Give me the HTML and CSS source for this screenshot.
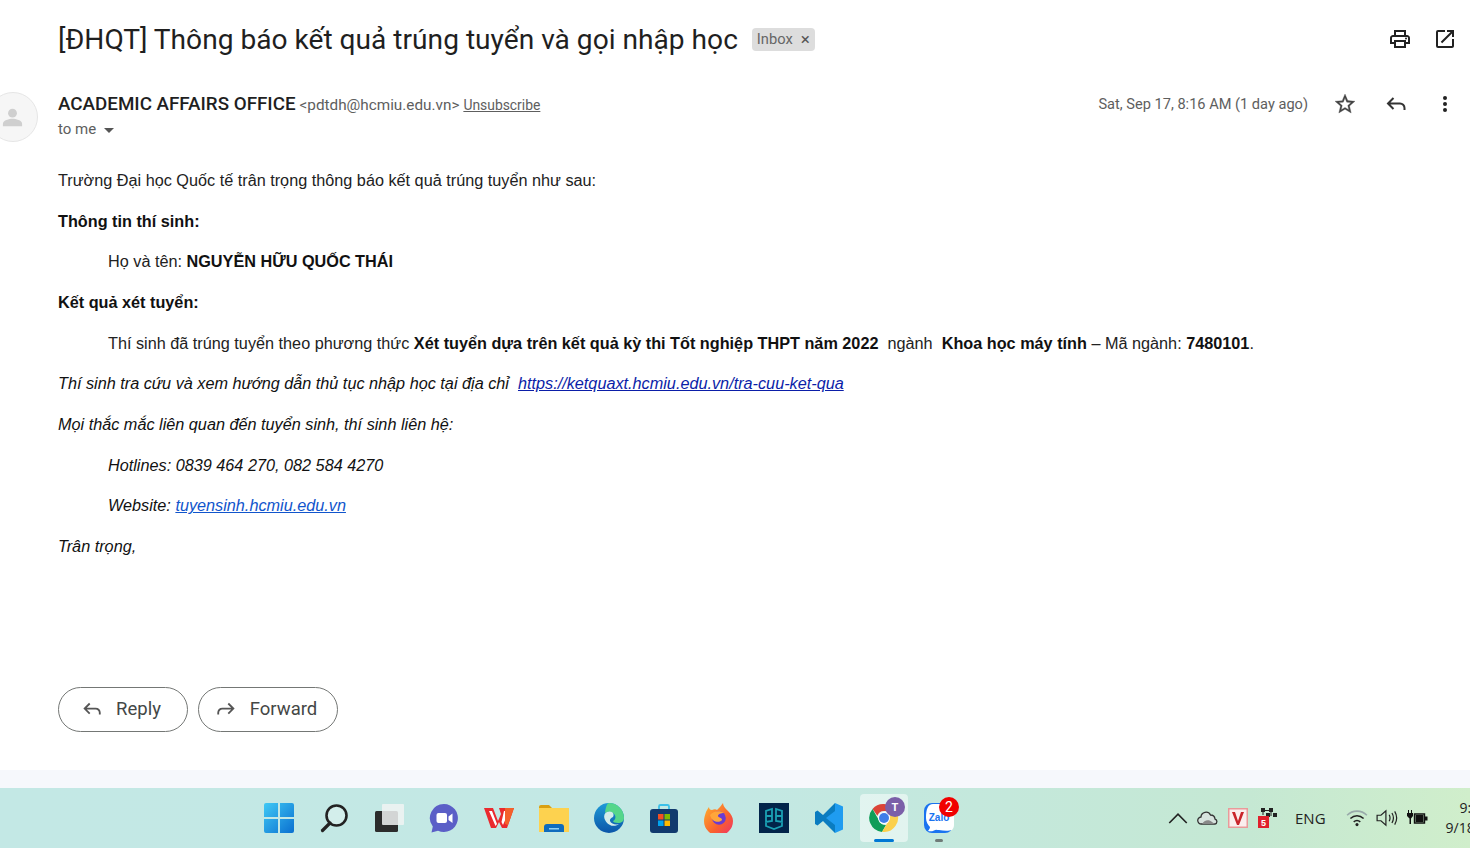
FILE: index.html
```html
<!DOCTYPE html>
<html lang="vi">
<head>
<meta charset="utf-8">
<title>Thông báo kết quả trúng tuyển</title>
<link rel="stylesheet" href="styles.css">
</head>
<body>
<div class="page">
<main class="mail">
  <header class="subject-row">
    <h1 class="subject">[ĐHQT] Thông báo kết quả trúng tuyển và gọi nhập học</h1>
    <span class="label">Inbox<span class="label-x">×</span></span>
    <div class="subject-actions">
      <svg class="icon" viewBox="0 0 24 24"><path d="M19 8h-1V3H6v5H5c-1.66 0-3 1.34-3 3v6h4v4h12v-4h4v-6c0-1.66-1.34-3-3-3zM8 5h8v3H8V5zm8 12v2H8v-4h8v2zm2-2v-2H6v2H4v-4c0-.55.45-1 1-1h14c.55 0 1 .45 1 1v4h-2z"/><circle cx="18" cy="11.5" r="1"/></svg>
      <svg class="icon" viewBox="0 0 24 24"><path d="M19 19H5V5h7V3H5a2 2 0 0 0-2 2v14a2 2 0 0 0 2 2h14c1.1 0 2-.9 2-2v-7h-2v7zM14 3v2h3.59l-9.83 9.83 1.41 1.41L19 6.41V10h2V3h-7z"/></svg>
    </div>
  </header>

  <section class="sender-row">
    <div class="avatar">
      <svg viewBox="0 0 24 24" class="avatar-glyph"><circle cx="12" cy="7.5" r="4.6"/><path d="M2 21v-2.6c0-3.4 6.6-5 10-5s10 1.6 10 5V21z"/></svg>
    </div>
    <div class="sender-meta">
      <div class="sender-line"><span class="sender-name">ACADEMIC AFFAIRS OFFICE</span> <span class="sender-mail">&lt;pdtdh@hcmiu.edu.vn&gt;</span> <a class="unsub">Unsubscribe</a></div>
      <div class="to-line">to me<span class="caret"></span></div>
    </div>
    <div class="sender-actions">
      <span class="date">Sat, Sep 17, 8:16 AM (1 day ago)</span>
      <svg class="icon star" viewBox="0 0 24 24"><path d="M22 9.24l-7.19-.62L12 2 9.19 8.63 2 9.24l5.46 4.73L5.82 21 12 17.27 18.18 21l-1.63-7.03L22 9.24zM12 15.4l-3.76 2.27 1-4.28-3.32-2.88 4.38-.38L12 6.1l1.71 4.04 4.38.38-3.32 2.88 1 4.28L12 15.4z"/></svg>
      <svg class="icon line-icon" viewBox="0 0 24 24"><path d="M9.5 6 4 11.5 9.500 17M4.500 11.500H16a4.500 4.500 0 0 1 4.500 4.500v2"/></svg>
      <svg class="icon" viewBox="0 0 24 24"><circle cx="12" cy="6" r="2"/><circle cx="12" cy="12" r="2"/><circle cx="12" cy="18" r="2"/></svg>
    </div>
  </section>

  <article class="message">
    <p>Trường Đại học Quốc tế trân trọng thông báo kết quả trúng tuyển như sau:</p>
    <p><b>Thông tin thí sinh:</b></p>
    <p class="indent">Họ và tên: <b>NGUYỄN HỮU QUỐC THÁI</b></p>
    <p><b>Kết quả xét tuyển:</b></p>
    <p class="indent">Thí sinh đã trúng tuyển theo phương thức <b>Xét tuyển dựa trên kết quả kỳ thi Tốt nghiệp THPT năm 2022</b>&nbsp; ngành&nbsp; <b>Khoa học máy tính</b> – Mã ngành: <b>7480101</b>.</p>
    <p><i>Thí sinh tra cứu và xem hướng dẫn thủ tục nhập học tại địa chỉ&nbsp; <a class="link-dark">https://ketquaxt.hcmiu.edu.vn/tra-cuu-ket-qua</a></i></p>
    <p><i>Mọi thắc mắc liên quan đến tuyển sinh, thí sinh liên hệ:</i></p>
    <p class="indent"><i>Hotlines: 0839 464 270, 082 584 4270</i></p>
    <p class="indent"><i>Website: <a class="link-blue">tuyensinh.hcmiu.edu.vn</a></i></p>
    <p><i>Trân trọng,</i></p>
  </article>

  <div class="reply-actions">
    <button class="pill pill-reply">
      <svg class="pill-icon" viewBox="0 0 24 24"><path d="M9.500 6 4 11.500 9.500 17M4.500 11.500H16a4.500 4.500 0 0 1 4.500 4.500v2"/></svg>
      Reply
    </button>
    <button class="pill pill-forward">
      <svg class="pill-icon" viewBox="0 0 24 24"><path d="M14.500 6 20 11.500 14.500 17M19.500 11.500H8A4.500 4.500 0 0 0 3.500 16v2"/></svg>
      Forward
    </button>
  </div>
</main>
<div class="strip"></div>

<footer class="taskbar">
  <div class="apps">
    <div class="app"><svg width="30" height="30" viewBox="0 0 30 30"><defs><linearGradient id="w" x1="0" y1="0" x2="1" y2="1"><stop offset="0" stop-color="#3fc9f5"/><stop offset="1" stop-color="#0a6fd0"/></linearGradient></defs><path fill="url(#w)" d="M2 0h12v14H0V2a2 2 0 0 1 2-2zM16 0h12a2 2 0 0 1 2 2v12H16zM0 16h14v14H2a2 2 0 0 1-2-2zM16 16h14v12a2 2 0 0 1-2 2H16z"/></svg></div>
    <div class="app"><svg width="30" height="30" viewBox="0 0 30 30"><circle cx="17.500" cy="12.500" r="10" fill="#d3eeeb" stroke="#222" stroke-width="2.600"/><path d="M11 20 3.500 27.500" stroke="#222" stroke-width="3.200" stroke-linecap="round"/></svg></div>
    <div class="app"><svg width="30" height="30" viewBox="0 0 30 30"><rect x="1" y="8" width="23" height="21" rx="1.500" fill="#2c2c2c"/><rect x="8" y="1" width="22" height="21" rx="1" fill="#f1f3f3" fill-opacity=".85"/></svg></div>
    <div class="app"><svg width="30" height="30" viewBox="0 0 30 30"><path fill="#5b5fc7" d="M15 1a14 14 0 1 1-6 26.700L2.500 29.500l1.300-6A14 14 0 0 1 15 1z"/><rect x="7.500" y="10" width="10.500" height="10" rx="2" fill="#fff"/><path fill="#fff" d="m19.500 13.500 4-3v9.500l-4-3z"/></svg></div>
    <div class="app"><svg width="30" height="30" viewBox="0 0 30 30"><path fill="#ea2a2f" d="M0 5h9l5 13 3-7-2-6h15l-7 20h-5l-3-6-3 6H7z"/><path fill="#fff" d="M5 8h3l5 13-1.500 2zM20 8h5l-6 14-1.500-3z"/><path fill="#f4602a" d="M21 5h9l-6 17-3-1z"/></svg></div>
    <div class="app"><svg width="30" height="30" viewBox="0 0 30 30"><path fill="#d9a013" d="M0 4a2 2 0 0 1 2-2h8l3 3H0z"/><rect y="5" width="30" height="24" fill="#fdd24f"/><path fill="#0f6cbd" d="M5 29v-5a3 3 0 0 1 3-3h14a3 3 0 0 1 3 3v5z"/><rect x="10" y="25" width="10" height="1.500" fill="#8fd0f5"/></svg></div>
    <div class="app"><svg width="30" height="30" viewBox="0 0 30 30"><defs><linearGradient id="e" x1="0" y1="0" x2="0" y2="1"><stop offset="0" stop-color="#1e9bd8"/><stop offset="1" stop-color="#0b55a8"/></linearGradient></defs><circle cx="15" cy="15" r="15" fill="url(#e)"/><path fill="#55d68a" d="M15 0a15 15 0 0 1 15 15c0 3-2.500 5-6 5-3 0-5-1-5-2 3-1 3.500-6 0-8-3-2-6-1-8 0 0 0 1-10 4-10z"/><path fill="#d3ecea" d="M13 9c5-2 8 2 6 5-2 1-3.500 2-3 4 1 3 6 4 9 3-1 1-6 3-9 1-6-3-8-11-3-13z"/></svg></div>
    <div class="app"><svg width="30" height="30" viewBox="0 0 30 30"><path d="M10 7V3.500A1.500 1.500 0 0 1 11.500 2h7A1.500 1.500 0 0 1 20 3.500V7" fill="none" stroke="#3cc0e8" stroke-width="1.800"/><rect x="1" y="6" width="28" height="24" rx="3" fill="#113a6e"/><rect x="9" y="11" width="5.500" height="5.500" fill="#f25022"/><rect x="15.500" y="11" width="5.500" height="5.500" fill="#7fba00"/><rect x="9" y="17.500" width="5.500" height="5.500" fill="#00a4ef"/><rect x="15.500" y="17.500" width="5.500" height="5.500" fill="#ffb900"/></svg></div>
    <div class="app"><svg width="30" height="30" viewBox="0 0 30 30"><defs><linearGradient id="f" x1="0" y1="0" x2="1" y2="1"><stop offset="0" stop-color="#ffb52e"/><stop offset=".6" stop-color="#f9602e"/><stop offset="1" stop-color="#ee2f70"/></linearGradient></defs><path fill="url(#f)" d="M2 9c1-2 2-4 3-5 0 2 1 3 3 3 2-1 4-1 5 0 2-2 4-4 6-7 0 3 2 5 5 8 3 3 5 6 5 10a14.500 14.500 0 0 1-29 0c0-3 1-6 2-9z"/><circle cx="15" cy="15" r="6.800" fill="#6a3bd1"/><path fill="#ffa63a" d="M6 12c3-4 10-5 14-2-3 0-6 1-6 3 0 2 4 1 4 4-2 3-10 3-12-5z"/></svg></div>
    <div class="app"><svg width="30" height="30" viewBox="0 0 30 30"><rect width="30" height="30" fill="#02244a"/><path fill="none" stroke="#1aa0b4" stroke-width="1.800" d="M7 19V8l6-2v12l-6 1zm16 0V8l-6-2v12l6 1zM7 19v4l8 3 8-3v-4M13 13H7m10 0h6"/></svg></div>
    <div class="app"><svg width="30" height="30" viewBox="0 0 30 30"><path fill="#0a7cc0" d="M21 0 9 12 3.500 7.500 1 9v12l2.500 1.500L9 18l12 12z"/><path fill="#1f9cf0" d="M21 0l8 3.500v23L21 30zM21 8l-9 7 9 7z"/><path fill="#0a7cc0" d="M3.500 10.500 7 15l-3.500 4.500z"/></svg></div>
    <div class="app app-active">
      <svg class="chrome" width="30" height="30" viewBox="0 0 30 30"><path fill="#db4437" d="M15 1a14 14 0 0 1 12.100 7H15a7 7 0 0 0-6.600 4.700L3.500 6A14 14 0 0 1 15 1z"/><path fill="#0f9d58" d="M3.500 6l6 10.500A7 7 0 0 0 17 22l-4 6.900A14 14 0 0 1 3.500 6z"/><path fill="#fbd04c" d="M27.100 8a14 14 0 0 1-14.100 20.900L19.500 18a7 7 0 0 0-1-9.900z"/><circle cx="15" cy="15" r="6" fill="#fff"/><circle cx="15" cy="15" r="5" fill="#3f7ee8"/></svg>
      <span class="badge badge-teams">T</span>
      <span class="run run-active"></span>
    </div>
    <div class="app">
      <svg width="30" height="30" viewBox="0 0 30 30"><path fill="#1a73f0" d="M8 0h14c4 0 6 2 7 5v17a8 8 0 0 1-8 8H8a8 8 0 0 1-8-8V8a8 8 0 0 1 8-8z"/><path fill="#fff" d="M9 1h13c4 0 8 3 8 8v13c0 2-1 4-2 5-3 1-8 1-13 0-2 0-3-1-5 .500-2 1-4 1-6 .500 1-1 2-3 2-4-2-2-4-5-4-9C2 6 4 1 9 1z"/><text class="zalo-text" x="15" y="18" text-anchor="middle">Zalo</text></svg>
      <span class="badge badge-red">2</span>
      <span class="run run-idle"></span>
    </div>
  </div>
  <div class="tray">
    <svg class="tray-icon tray-chevron" viewBox="0 0 16 16"><path d="M1 12 8 5l7 7"/></svg>
    <svg class="tray-icon" viewBox="0 0 22 16"><path fill="#d7e3de" stroke="#333" stroke-width="1.300" d="M4.500 14a3.500 3.500 0 0 1-.5-7A5 5 0 0 1 13.500 5 4.500 4.500 0 0 1 18 9a2.600 2.600 0 0 1 0 5z"/><path fill="#888" d="M5 14c2-4 7-5 10-2l3 2z"/></svg>
    <svg class="tray-icon" viewBox="0 0 20 20"><rect width="20" height="20" fill="#e99a9a"/><rect x="1.500" y="1.500" width="17" height="17" fill="#fbeeee"/><path fill="#c9252b" d="M4 4h3l3 9 3-9h3l-5 13H9z"/></svg>
    <svg class="tray-icon" viewBox="0 0 20 20"><path fill="#222" d="M3 0h4v4H3zM11 0h4v4h-4zM7 2h4v1H7zM4.500 4h1v3h-1zM12.500 4h1v4h-1zM15 5h4v4h-4zM8 5h4v4H8z"/><rect y="8" width="11" height="12" fill="#e0202c"/><text class="tray-five" x="5.500" y="17.500" text-anchor="middle">5</text></svg>
    <span class="tray-lang">ENG</span>
    <svg class="tray-icon tray-wifi" viewBox="0 0 20 16"><path class="wifi-faint" d="M1 5.500c5-5 13-5 18 0"/><path d="M4 8.500c3.500-3.300 8.500-3.300 12 0M7 11.500c1.800-1.500 4.200-1.500 6 0"/><circle cx="10" cy="14" r="1.400" class="wifi-dot"/></svg>
    <svg class="tray-icon tray-sound" viewBox="0 0 20 16"><path d="M1 5.500h3.500L9 1.500v13l-4.500-4H1zM12 5c1 2 1 4 0 6M14.500 3.500c1.800 3 1.800 6 0 9M17 2c2.400 4 2.400 8 0 12"/></svg>
    <svg class="tray-icon tray-battery" viewBox="0 0 22 18"><path fill="#111" d="M2 1h1v3h2V1h1v3h1v3L5 9.500V15H3.500V9.500L1 7V4h1z"/><path fill="none" stroke="#111" stroke-width="1.400" d="M8.500 5h10v9h-10z"/><rect x="9.500" y="6" width="8" height="7" fill="#111"/><rect x="19" y="7.500" width="2.500" height="4" fill="#111"/></svg>
    <div class="clock"><div>9:21 PM</div><div>9/18/2022</div></div>
  </div>
</footer>
</div>
</body>
</html>
```

FILE: styles.css
```css
* { box-sizing: border-box; }
html, body { margin: 0; padding: 0; height: 100%; overflow: hidden; background: #fff; }
body { font-family: Roboto, "Liberation Sans", sans-serif; color: #222; }

.page { width: 1470px; height: 848px; display: flex; flex-direction: column; overflow: hidden; }

.mail { height: 770px; padding: 19px 13px 0 58px; background: #fff; display: flex; flex-direction: column; }

.subject-row { display: flex; align-items: center; height: 40px; }
.subject { margin: 0; font-family: Roboto, sans-serif; font-size: 28.130px; font-weight: 400; line-height: 42px; height: 40px; color: #1f1f1f; white-space: nowrap; }
.label { margin-left: 14px; width: 63px; height: 23px; padding: 0 5px; display: inline-flex; align-items: center; justify-content: space-between; background: #dddddd; border-radius: 4px; font-size: 14.700px; color: #666; }
.label-x { font-size: 17px; color: #555; }
.subject-actions { margin-left: auto; display: flex; gap: 21px; }

.icon { width: 24px; height: 24px; fill: #222; flex: none; display: block; }
.line-icon { fill: none; stroke: #333; stroke-width: 2; }
.star { fill: #444; stroke: #444; stroke-width: .3; }

.sender-row { margin-top: 33px; height: 50px; display: flex; align-items: flex-start; }
.avatar { width: 50px; height: 50px; margin-left: -70px; margin-right: 20px; border-radius: 50%; background: #f6f6f6; border: 1px solid #e6e6e6; display: flex; align-items: center; justify-content: flex-end; padding-right: 13px; flex: none; }
.avatar-glyph { width: 23px; height: 23px; fill: #cfcfcf; }
.sender-meta { padding-top: 2px; }
.sender-line { line-height: 20px; white-space: nowrap; }
.sender-name { font-size: 18.800px; font-weight: 500; color: #1f1f1f; }
.sender-mail { font-size: 15.300px; color: #5e5e5e; }
.unsub { font-size: 13.900px; color: #5e5e5e; text-decoration: underline; }
.to-line { margin-top: 4px; line-height: 20px; font-size: 15px; color: #5e5e5e; display: flex; align-items: center; }
.caret { margin-left: 8px; margin-top: 2px; width: 0; height: 0; border-left: 5.500px solid transparent; border-right: 5.500px solid transparent; border-top: 5px solid #555; }
.sender-actions { margin-left: auto; display: flex; align-items: center; height: 24px; margin-top: 0; }
.date { font-size: 14.600px; color: #5e5e5e; margin-right: 25px; white-space: nowrap; }
.sender-actions .star { margin-right: 27px; }
.sender-actions .line-icon { margin-right: 25px; }

.message { margin-top: 28px; font-family: "Liberation Sans", Arial, sans-serif; font-size: 16.240px; line-height: 20px; color: #222; display: flex; flex-direction: column; gap: 20.670px; }
.message p { margin: 0; white-space: nowrap; }
.message b { color: #111; }
.message i { color: #111; }
.indent { padding-left: 50px; }
.link-dark { color: #0b1ea8; text-decoration: underline; }
.link-blue { color: #1155cc; text-decoration: underline; }

.reply-actions { margin-top: 131px; display: flex; gap: 10px; }
.pill { height: 45px; border: 1px solid #747775; border-radius: 23px; background: #fff; font-family: Roboto, sans-serif; font-size: 18.500px; color: #444746; display: flex; align-items: center; justify-content: center; gap: 13px; padding: 0; }
.pill-reply { width: 130px; padding-right: 4px; }
.pill-forward { width: 140px; padding-right: 4px; }
.pill-icon { width: 22px; height: 22px; fill: none; stroke: #555; stroke-width: 2; }

.strip { height: 18px; background: #f6f8fc; }

.taskbar { height: 60px; display: flex; align-items: center; background: linear-gradient(90deg, #c3e8e5 0%, #c3e8e4 50%, #c5e8d3 85%, #d0eecb 100%); padding-left: 251px; }
.apps { display: flex; width: 715px; flex: none; }
.app { width: 55px; height: 60px; flex: none; display: flex; align-items: center; justify-content: center; position: relative; }
.app-active::before { content: ""; position: absolute; left: 4px; top: 6px; width: 48px; height: 48px; border-radius: 4px; background: rgba(255, 255, 255, .5); }
.chrome { position: relative; }
.badge { position: absolute; width: 20px; height: 20px; border-radius: 50%; display: flex; align-items: center; justify-content: center; font-size: 12px; left: 29px; top: 9px; color: #fff; }
.badge-teams { background: #7b5fa8; font-weight: 700; font-size: 11px; }
.badge-red { background: #f10000; font-size: 14px; left: 28px; }
.run { position: absolute; top: 51px; border-radius: 2px; height: 3px; }
.run-active { width: 20px; left: 18px; background: #0078d4; }
.run-idle { width: 8px; left: 24px; background: #6f7b78; }
.zalo-text { font-family: "Liberation Sans", sans-serif; font-size: 10px; font-weight: 700; fill: #1a73f0; }

.tray { margin-left: 201px; display: flex; align-items: center; flex: none; }
.tray-icon { width: 22px; height: 20px; flex: none; margin-right: 8px; }
.tray-chevron { fill: none; stroke: #222; stroke-width: 1.300; }
.tray-five { font-family: "Liberation Sans", sans-serif; font-size: 9px; font-weight: 700; fill: #fff; }
.tray-lang { font-family: "Open Sans", sans-serif; font-size: 15px; color: #222; margin: 0 20px 0 8px; }
.tray-wifi { fill: none; stroke: #222; stroke-width: 1.400; }
.wifi-faint { stroke: #9aa; }
.wifi-dot { fill: #222; stroke: none; }
.tray-sound { fill: none; stroke: #222; stroke-width: 1.100; }
.clock { margin-left: 10px; text-align: right; font-family: "Open Sans", sans-serif; font-size: 14px; line-height: 20px; color: #222; white-space: nowrap; }
```
